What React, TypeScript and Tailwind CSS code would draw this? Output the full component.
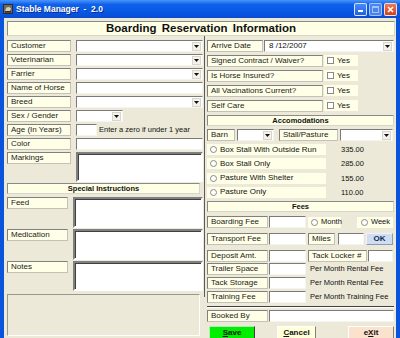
import React from 'react';

type P = { children?: React.ReactNode; className?: string };

const Label = ({ children, className = '' }: P) => (
  <div
    className={`shrink-0 h-[12px] bg-[#FFFFE8] border border-[#c4c2b8] border-t-[#808080] border-l-[#808080] text-[8px] leading-[10px] pl-[3px] overflow-hidden whitespace-nowrap text-[#1a1a1a] ${className}`}
  >
    {children}
  </div>
);

const Arrow = () => (
  <div className="w-[9px] h-[9px] mr-[1px] bg-[#f2f1ea] border border-[#d8d6cc] flex items-center justify-center">
    <svg width="5" height="3" viewBox="0 0 5 3">
      <path d="M0 0h5L2.5 3z" fill="#111" />
    </svg>
  </div>
);

const Box = ({ children, className = '', drop = false }: P & { drop?: boolean }) => (
  <div
    className={`shrink-0 h-[12px] bg-white border border-[#f4f4f0] border-t-[#7a7a7a] border-l-[#7a7a7a] flex items-center justify-between text-[8px] ${className}`}
  >
    <span className="pl-[4px] leading-[10px] whitespace-nowrap">{children}</span>
    {drop && <Arrow />}
  </div>
);

const Area = ({ className = '' }: P) => (
  <div
    className={`shrink-0 bg-white border-2 border-[#ffffff] border-t-[#808080] border-l-[#808080] shadow-[inset_1px_1px_0_#404040] ${className}`}
  />
);

const Header = ({ children, className = '' }: P) => (
  <div
    className={`shrink-0 h-[11px] bg-[#FFFFE6] border border-[#d8d6cc] border-t-[#8a8a8a] border-l-[#8a8a8a] flex items-center justify-center text-[7.5px] font-bold leading-none text-[#111] ${className}`}
  >
    {children}
  </div>
);

const Radio = () => (
  <span className="inline-block w-[7px] h-[7px] rounded-full bg-white border border-[#8a8a8a] mr-[3px] shrink-0" />
);

const Check = ({ className = '' }: P) => (
  <div className={`shrink-0 h-[11px] bg-[#FFFFE8] flex items-center pl-[3px] text-[8px] ${className}`}>
    <span className="inline-block w-[7px] h-[7px] bg-white border border-[#8a8a8a] mr-[3px]" />
    Yes
  </div>
);

const RadioRow = ({ label, price }: { label: string; price: string }) => (
  <div className="flex items-center mt-[3px]">
    <div className="w-[119px] h-[11px] bg-[#FFFFE8] flex items-center pl-[3px] text-[8px] whitespace-nowrap">
      <Radio />
      {label}
    </div>
    <span className="ml-[15px] text-[7.5px]">{price}</span>
  </div>
);

export default function App() {
  return (
    <div className="w-[400px] h-[338px] overflow-hidden bg-[#0A53DC] font-['Liberation_Sans',Arial,sans-serif] text-[#111]">
      {/* title bar */}
      <div className="h-[18px] flex items-center bg-[linear-gradient(to_bottom,#4a95fb_0%,#0f61ea_25%,#0655e2_75%,#0a4ccc_100%)]">
        <svg width="10" height="10" viewBox="0 0 10 10" className="ml-[3px]">
          <rect x="0.5" y="0.5" width="9" height="9" fill="#6d6a63" stroke="#2b2b2b" />
          <path d="M2 7 L3.5 3.5 L6 3 L8 4.5 L7 7z" fill="#d9cfb8" />
          <rect x="2" y="7" width="6" height="1.5" fill="#3a2a18" />
        </svg>
        <span className="ml-[3px] text-white font-bold text-[8.5px] whitespace-pre [text-shadow:1px_1px_0_#0a2a8a]">
          {'Stable Manager  -  2.0'}
        </span>
        <div className="ml-auto flex items-center gap-[2px] mr-[3px]">
          <div className="w-[13px] h-[13px] rounded-[2px] border border-white/80 bg-[linear-gradient(to_bottom,#4a8cf7,#1f5fe0)] flex items-end pl-[3px] pb-[3px]">
            <div className="w-[5px] h-[2px] bg-white" />
          </div>
          <div className="w-[13px] h-[13px] rounded-[2px] border border-white/50 bg-[#5a8ef0]/80 flex items-center justify-center">
            <div className="w-[7px] h-[7px] border border-white/50 border-t-2" />
          </div>
          <div className="w-[13px] h-[13px] rounded-[2px] border border-white/80 bg-[linear-gradient(to_bottom,#ee7a52,#d0401c)] flex items-center justify-center">
            <svg width="7" height="7" viewBox="0 0 7 7">
              <path d="M1 1 L6 6 M6 1 L1 6" stroke="#fff" strokeWidth="1.6" />
            </svg>
          </div>
        </div>
      </div>

      {/* client area */}
      <div className="mx-[4px] h-[320px] bg-[#ECE9D8] pl-[3px] pt-[3px]">
        <div className="w-[388px] h-[15px] bg-[#FFFFE6] border border-[#d8d6cc] border-t-[#8a8a8a] border-l-[#8a8a8a] flex items-center justify-center text-[11.5px] font-bold [word-spacing:2px]">
          Boarding Reservation Information
        </div>

        <div className="flex mt-[4px]">
          {/* left column */}
          <div className="w-[196px] flex flex-col">
            <div className="flex flex-col gap-[2px]">
              {[
                ['Customer', true],
                ['Veterinarian', true],
                ['Farrier', true],
                ['Name of Horse', false],
                ['Breed', true],
              ].map(([l, d]) => (
                <div key={l as string} className="flex">
                  <Label className="w-[64px]">{l}</Label>
                  <Box className="ml-[5px] w-[127px]" drop={d as boolean} />
                </div>
              ))}
              <div className="flex">
                <Label className="w-[64px]">Sex / Gender</Label>
                <Box className="ml-[5px] w-[47px]" drop />
              </div>
              <div className="flex items-center">
                <Label className="w-[64px]">Age (In Years)</Label>
                <Box className="ml-[5px] w-[21px]" />
                <span className="ml-[2px] text-[7.5px] whitespace-nowrap">Enter a zero if under 1 year</span>
              </div>
              <div className="flex">
                <Label className="w-[64px]">Color</Label>
                <Box className="ml-[5px] w-[127px]" />
              </div>
              <div className="flex">
                <Label className="w-[64px]">Markings</Label>
                <Area className="ml-[5px] w-[127px] h-[30px]" />
              </div>
            </div>

            <Header className="w-[193px] mt-[1px]">Special Instructions</Header>

            <div className="flex mt-[3px]">
              <Label className="w-[61px] h-[11px]">Feed</Label>
              <Area className="ml-[5px] w-[130px] h-[31px]" />
            </div>
            <div className="flex mt-[1px]">
              <Label className="w-[61px] h-[11px]">Medication</Label>
              <Area className="ml-[5px] w-[130px] h-[31px]" />
            </div>
            <div className="flex mt-[1px]">
              <Label className="w-[61px] h-[11px]">Notes</Label>
              <Area className="ml-[5px] w-[130px] h-[30px]" />
            </div>

            <div className="w-[193px] h-[42px] mt-[3px] border border-white border-t-[#9a988e] border-l-[#9a988e]" />
          </div>

          {/* divider */}
          <div className="w-[4px] flex justify-center mt-[-4px]">
            <div className="w-[2px] h-[261px] border-l border-[#ffffff] border-l-[#5a5a5a]" />
          </div>

          {/* right column */}
          <div className="w-[187px] flex flex-col">
            <div className="flex">
              <Label className="w-[56px]">Arrive Date</Label>
              <Box className="ml-[1px] w-[130px]" drop>
                8 /12/2007
              </Box>
            </div>
            {['Signed Contract / Waiver?', 'Is Horse Insured?', 'All Vacinations Current?', 'Self Care'].map((l) => (
              <div key={l} className="flex mt-[3px]">
                <Label className="w-[116px] h-[11px]">{l}</Label>
                <Check className="ml-[1px] w-[34px]" />
              </div>
            ))}

            <Header className="w-[187px] mt-[3px]">Accomodations</Header>

            <div className="flex mt-[3px]">
              <Label className="w-[28px]">Barn</Label>
              <Box className="ml-[2px] w-[37px]" drop />
              <Label className="ml-[5px] w-[59px]">Stall/Pasture</Label>
              <Box className="ml-[2px] w-[53px]" drop />
            </div>

            <RadioRow label="Box Stall With Outside Run" price="335.00" />
            <RadioRow label="Box Stall Only" price="285.00" />
            <RadioRow label="Pasture With Shelter" price="155.00" />
            <RadioRow label="Pasture Only" price="110.00" />

            <Header className="w-[187px] mt-[3px]">Fees</Header>

            <div className="flex items-center mt-[4px]">
              <Label className="w-[61px]">Boarding Fee</Label>
              <Box className="ml-[1px] w-[37px]" />
              <div className="ml-[2px] w-[33px] h-[11px] bg-[#FFFFE8] flex items-center pl-[3px] text-[7.5px]">
                <Radio />
                Month
              </div>
              <div className="ml-[16px] w-[36px] h-[11px] bg-[#FFFFE8] flex items-center pl-[4px] text-[7.5px]">
                <Radio />
                Week
              </div>
            </div>

            <div className="flex items-center mt-[5px]">
              <Label className="w-[61px]">Transport Fee</Label>
              <Box className="ml-[1px] w-[37px]" />
              <Label className="ml-[2px] w-[27px]">Miles</Label>
              <Box className="ml-[3px] w-[26px]" />
              <div className="ml-[2px] w-[27px] h-[12px] bg-[#cfdcf2] border border-[#eef2fa] border-b-[#8a9ab8] border-r-[#8a9ab8] flex items-center justify-center text-[8px] font-bold text-[#0b2a5a]">
                OK
              </div>
            </div>

            <div className="flex mt-[5px]">
              <Label className="w-[61px]">Deposit Amt.</Label>
              <Box className="ml-[1px] w-[37px]" />
              <Label className="ml-[2px] w-[59px]">Tack Locker #</Label>
              <Box className="ml-[1px] w-[25px]" />
            </div>

            {[
              ['Trailer Space', 'Per Month Rental Fee', 'mt-[1px]'],
              ['Tack Storage', 'Per Month Rental Fee', 'mt-[2px]'],
              ['Training Fee', 'Per Month Training Fee', 'mt-[2px]'],
            ].map(([l, t, m]) => (
              <div key={l} className={`flex items-center ${m}`}>
                <Label className="w-[61px]">{l}</Label>
                <Box className="ml-[1px] w-[37px]" />
                <span className="ml-[4px] text-[7.5px] whitespace-nowrap">{t}</span>
              </div>
            ))}

            <div className="w-[187px] h-[2px] mt-[3px] border-t border-[#404040] border-b border-b-white" />

            <div className="flex mt-[2px]">
              <Label className="w-[61px]">Booked By</Label>
              <Box className="ml-[1px] w-[125px]" />
            </div>

            <div className="flex mt-[4px]">
              <div className="ml-[2px] w-[46px] h-[13px] bg-[#00EE00] border border-[#b0f0b0] border-b-[#404040] border-r-[#404040] flex items-center justify-center text-[8px] font-bold">
                <span className="underline">S</span>ave
              </div>
              <div className="ml-[22px] w-[39px] h-[13px] bg-[#FFFFD8] border border-white border-b-[#808080] border-r-[#808080] flex items-center justify-center text-[8px] font-bold">
                <span className="underline">C</span>ancel
              </div>
              <div className="ml-[32px] w-[46px] h-[13px] bg-[#FBE2CD] border border-white border-b-[#808080] border-r-[#808080] flex items-center justify-center text-[8px] font-bold">
                e<span className="underline">X</span>it
              </div>
            </div>
          </div>
        </div>
      </div>
    </div>
  );
}
